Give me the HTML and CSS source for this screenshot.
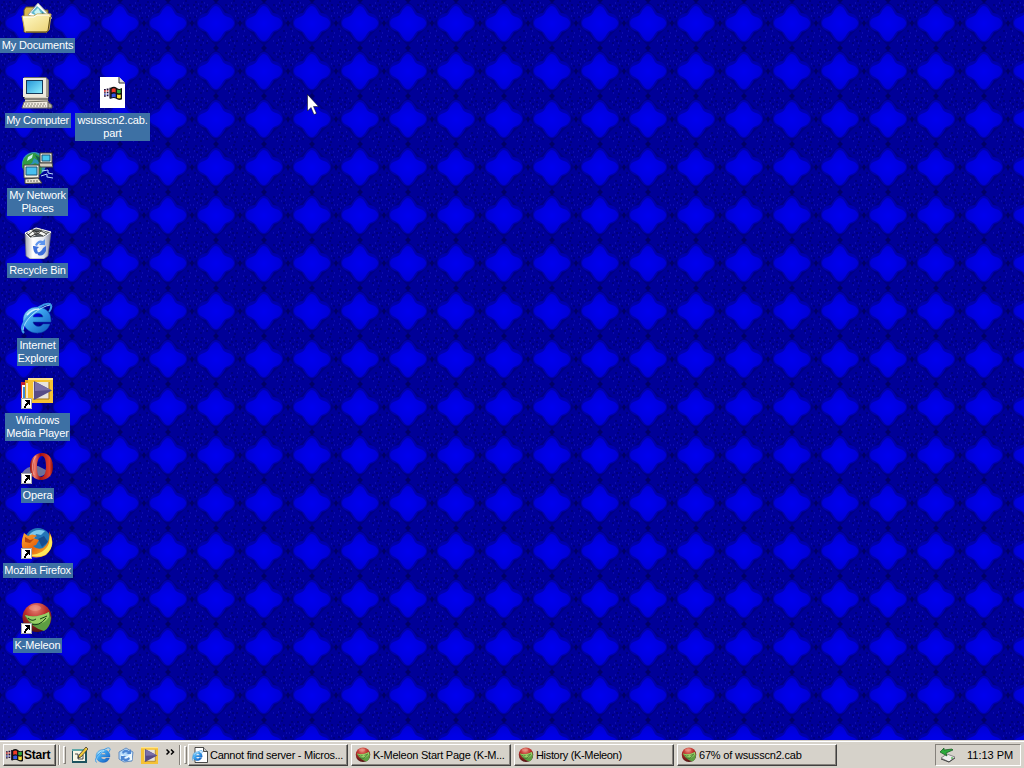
FILE: index.html
```
<!DOCTYPE html>
<html lang="en">
<head>
<meta charset="utf-8">
<title>Desktop</title>
<link rel="stylesheet" href="styles.css">
</head>
<body>
<svg class="defs" width="0" height="0" aria-hidden="true">
  <defs>
    <radialGradient id="gBall" cx=".45" cy=".2" r=".8"><stop offset="0" stop-color="#e88878"/><stop offset=".45" stop-color="#bd2f2c"/><stop offset="1" stop-color="#4c1210"/></radialGradient>
    <linearGradient id="gBlue" x1="0" y1="0" x2="1" y2="1"><stop offset="0" stop-color="#a8e4ff"/><stop offset=".4" stop-color="#3ca4ee"/><stop offset="1" stop-color="#0b54bc"/></linearGradient>
    <linearGradient id="gFold" x1="0" y1="0" x2="1" y2="1"><stop offset="0" stop-color="#fffbc8"/><stop offset="1" stop-color="#ecd274"/></linearGradient>
    <linearGradient id="gScreen" x1="0" y1="0" x2="1" y2="1"><stop offset="0" stop-color="#2898d8"/><stop offset="1" stop-color="#8ceeff"/></linearGradient>
    <linearGradient id="gBin"><stop offset="0" stop-color="#a4a8b4"/><stop offset=".3" stop-color="#fff"/><stop offset=".7" stop-color="#e4e8f2"/><stop offset="1" stop-color="#84889c"/></linearGradient>
    <linearGradient id="gOpera"><stop offset="0" stop-color="#8c0808"/><stop offset=".2" stop-color="#f07c6c"/><stop offset=".45" stop-color="#a01010"/><stop offset=".85" stop-color="#e04030"/><stop offset="1" stop-color="#800c0c"/></linearGradient>
    <linearGradient id="gFox" x1="0" y1="0" x2="1" y2="1"><stop offset="0" stop-color="#ffb13c"/><stop offset=".5" stop-color="#e8640c"/><stop offset="1" stop-color="#ffd83c"/></linearGradient>
    <radialGradient id="gLobe"><stop offset="0" stop-color="#0000ee"/><stop offset=".5" stop-color="#0000e4"/><stop offset="1" stop-color="#0000d4"/></radialGradient>
    <filter id="soft" x="0" y="0" width="1" height="1"><feGaussianBlur stdDeviation=".5"/></filter>

    <pattern id="tile" width="48" height="48" patternUnits="userSpaceOnUse">
      <rect width="48" height="48" fill="#000098"/>
      <path d="M24 1L47 23 24 46 1 23z" fill="#000084"/>
      <path d="M-2 23L0 20 2 23 0 27zM46 23L48 20 50 23 48 27zM21 0L24-3 27 0 24 3zM21 48L24 45 27 48z" fill="#000068"/>
      <path d="M24 4C28 4 30 8 33 13C39 13 43 18 43 23C43 28 39 31 34 32C31 38 28 42 24 42C20 42 17 38 14 32C9 31 5 28 5 23C5 18 9 13 15 13C18 8 20 4 24 4z" fill="#0000ae"/>
      <path d="M24 6C26 6 28 8 30 12C31 15 33 16 36 17C40 18 42 21 42 23C42 26 39 29 36 30C32 31 31 34 29 37C27 39 26 41 24 41C22 41 20 39 18 36C16 32 14 31 11 29C8 28 6 26 6 23C6 20 8 18 12 17C15 16 17 14 18 11C20 8 22 6 24 6z" fill="url(#gLobe)"/>
      <path d="M2 7h1M6 4h1M10 9h1M1 13h1M5 11h1M12 3h1M39 3h1M45 8h1M41 9h1M36 6h1M46 13h1M3 36h1M7 40h1M11 43h1M2 44h1M10 36h1M38 40h1M42 43h1M45 37h1M37 45h1M46 33h1M4 16h1M8 13h1M15 5h1M43 16h1M4 31h1M15 41h1M33 41h1" stroke="#1818c4"/>
      <path d="M4 8h2M8 6h2M13 7h2M3 2h2M43 5h2M37 9h2M41 1h2M4 41h2M8 45h2M14 43h2M44 41h2M39 37h2M42 46h2M33 5h2M2 17h2M45 18h2M2 29h2M43 31h2M8 11h2M1 5h2M9 2h2M39 6h2M43 11h2M5 37h2M10 40h2M36 43h2M40 41h2" stroke="#000064"/>
    </pattern>

    <symbol id="arrow" viewBox="0 0 11 11"><path d="M0 0h11v11H0z" fill="#fff"/><path d="M.5.5h10v10H.5z" fill="none" stroke="#555" stroke-width=".5"/><path d="M4 2h5v5H8V6H7v1H6v1H5v2H3V8h1V6h1V5h1V4H5V3H4z" fill="#000"/></symbol>

    <symbol id="flag" viewBox="0 0 20 16">
      <path d="M0 3h2v1.500H0zM3 2.500h2V4H3zM0 6.500h2V8H0zM3 6h2v1.500H3zM0 10h2v1.500H0zM3 9.500h2V11H3zM6 1.500h1.500v12H6z" fill="#201038"/>
      <path d="M0 4.500h2v1.500H0zM3 4.500h2v1H3z" fill="#d02020"/><path d="M0 8.500h2v1H0zM3 8h2v1H3z" fill="#2838c8"/>
      <path d="M7 2Q11-1 14 1.500T20 2V14.500Q17 16 14 14T7 14z" fill="#111"/>
      <path d="M8.500 3Q11 1.500 13 2.800V7Q11 5.800 8.500 7z" fill="#f03c28"/><path d="M14.500 3.500Q17 4.500 18.600 3.500V7.500Q17 8.500 14.500 7.500z" fill="#30a838"/>
      <path d="M8.500 8.500Q11 7.300 13 8.400V12.500Q11 11.500 8.500 12.500z" fill="#3454e0"/><path d="M14.500 9Q17 10 18.600 9V13Q17 14 14.500 13z" fill="#f8dc30"/>
    </symbol>

    <symbol id="docs" viewBox="0 0 32 32">
      <path d="M3 8L5 5h8l2 3h12v12l-1 10H3z" fill="#d8b850" stroke="#60501c"/>
      <path d="M7 13L17 1 31 16 25 20z" fill="#fff" stroke="#9098a0"/><path d="M10 11l6-7 10 9-4 4z" fill="#60b8cc"/><path d="M13 10l4-4 3 5-4 3z" fill="#c8f4f4"/><path d="M21 10l3 3-3 2z" fill="#286098"/>
      <path d="M1 14h12l3-2h14l-2 16-2 2H4z" fill="url(#gFold)" stroke="#c8aa50"/><path d="M29 15l-2 14-2 1H5" fill="none" stroke="#584814"/><path d="M2 15h11l3-2h12" fill="none" stroke="#fff"/>
    </symbol>
    <symbol id="pc" viewBox="0 0 32 32">
      <path d="M3 0h22l3 3v17l-3 2H3z" fill="#70706c"/><path d="M2 1h23v19H2z" fill="#eeeade"/><path d="M25 1l2 2v16l-2 1z" fill="#a49f90"/><path d="M5 3h17v14H5z" fill="#173858"/><path d="M6 4h15v12H6z" fill="url(#gScreen)"/>
      <path d="M4 20h23v5H4z" fill="#d8d2c2"/><path d="M4 22h24" stroke="#333"/><path d="M3 25l24-1 2 7H1z" fill="#efebdf" stroke="#706c60"/><path d="M4 27h20M3 29h22" stroke="#888478" stroke-dasharray="2 1"/><path d="M27 25l4 3v3h-4z" fill="#b8b4a8" stroke="#555"/>
    </symbol>
    <symbol id="net" viewBox="0 0 32 32">
      <circle cx="13" cy="12" r="12" fill="#2c90b8"/><path d="M2 9Q6 1 14 1l6 4-4 3-3-2-2 5-5 3-2 5-3-4zM8 15l6-4 7 3-1 8-8 1z" fill="#319b43"/><path d="M7 5l5-3-1 4-5 3z" fill="#c8f4e8"/><path d="M14 3l7 4-3 4z" fill="#125f53"/>
      <path d="M19 1h12v10H19z" fill="#f0ece0" stroke="#383830"/><path d="M21 3h8v6h-8z" fill="#48c8f0" stroke="#185478"/><path d="M18 11h13l1 4H19z" fill="#d0ccbc" stroke="#444"/>
      <path d="M3 13h15v13H3z" fill="#f4f0e4" stroke="#45453b"/><path d="M5 15h11v8H5z" fill="#48c0f0" stroke="#185478"/><path d="M4 27l13-1 4 5-17 .5z" fill="#e8e4d4" stroke="#45453b"/><path d="M6 29h12" stroke="#666" stroke-dasharray="2 1"/><path d="M21 19l6-1v3l5 1M20 24l6-2v3l6 1" fill="none" stroke="#b8d8ff"/>
    </symbol>
    <symbol id="bin" viewBox="0 0 32 32">
      <path d="M4 6L16 1 30 5 27 29 23 32H9L5 29z" fill="url(#gBin)" stroke="#646878" stroke-width=".7"/><path d="M4 6L15 1 30 5 23 10 9 11z" fill="#555b60" stroke="#fff"/>
      <path d="M6 6l5-3 4 3 5-3 7 3-5 3-5-2-6 3z" fill="#f6f6f2"/><path d="M7 8l5-4 3 4 5-4 6 3M10 2l6 3 5-2M9 10l7-4 6 3" fill="none" stroke="#222" stroke-width=".9"/>
      <path d="M14 18Q17 12 22 14L24 12V18H18L20 16Q17 16 16 19z" fill="#5c94ee"/><path d="M13 19l5 1-2 2 1 4-2 1q-3-3-3-8zM25 19v5q-3 6-8 4l-1-3q4 1 6-4z" fill="#3c6fdb"/>
    </symbol>
    <symbol id="ie" viewBox="0 0 32 32">
      <path fill-rule="evenodd" d="M16 5C24 5 30 10 30 18V20H12C13 25 20 26 22 22H29C27 28 22 31 16 31C8 31 2 25 2 18C2 11 8 5 16 5zM12 15H22C21 10 13 10 12 15z" fill="url(#gBlue)" stroke="#0d4da8" stroke-width=".5"/>
      <path d="M3 31Q-3 25 9 13Q22 0 29 2Q32 4 28 10" fill="none" stroke="#3b9ae8" stroke-width="2"/><path d="M2 28Q3 20 12 12Q22 4 29 3" fill="none" stroke="#9edaff"/>
      <path d="M6 13q5-6 12-6" fill="none" stroke="#d2f4ff" stroke-width="1.500"/>
    </symbol>
    <symbol id="wmp" viewBox="0 0 32 32">
      <path d="M0 5h7v20H0z" fill="#c02034"/><path d="M1 8h6v17H1z" fill="#f0f8ff"/><path d="M2 10h5v15H2z" fill="#3788d8"/><path d="M4 3h6v24H4z" fill="#e0a41c"/><path d="M5 6h3v21H5z" fill="#f6e9c4"/>
      <path d="M7 1h25v25H7z" fill="#f6c233"/><path d="M7 1h25v2H7z" fill="#ffe48c"/><path d="M12 5h16v17H12z" fill="#e8e4de"/><path d="M28 5v17H12" fill="none" stroke="#a0721d"/><path d="M13 4l18 9.500L13 23z" fill="#564b86"/><path d="M14 5l16 8-16 1z" fill="#7b70a8"/>
    </symbol>
    <symbol id="opera" viewBox="0 0 32 32">
      <path d="M1 21Q6 13 17 14L27 19Q22 27 9 24z" fill="#888b98" opacity=".8"/><path fill-rule="evenodd" d="M21 1C28 1 32 7 32 15S27 28 20 28S9 23 9 15S14 1 21 1zM21 4C18 4 16 9 16 15S17 25 20 25S25 21 25 15S24 4 21 4z" fill="url(#gOpera)"/><path d="M15 4Q9 12 13 23" fill="none" stroke="#ffc0b0" stroke-width=".6"/>
    </symbol>
    <symbol id="fox" viewBox="0 0 32 32">
      <circle cx="17" cy="14" r="13" fill="#2475b8"/><path d="M8 8Q14 1 24 4L20 8l-5-1-2 5z" fill="#7cc8ee"/><path d="M17 12l6-3 4 6-6 5z" fill="#164c91"/>
      <path d="M28 4Q36 18 25 28Q13 34 4 26Q-2 19 3 6L7 9Q11 6 16 9L12 11 18 13 15 18 12 19Q16 23 22 21Q30 15 28 4z" fill="url(#gFox)"/><path d="M29 7Q35 20 24 28Q16 31 9 28Q24 27 28 16z" fill="#ffe858"/><path d="M4 10l5 3 4-1-4 4-5-1z" fill="#b84811"/>
    </symbol>
    <symbol id="kmel" viewBox="0 0 32 32">
      <circle cx="16" cy="15.500" r="14.500" fill="url(#gBall)"/><path d="M4 13Q15 17 28 10L30 16Q29 26 23 29Q11 26 4 14z" fill="#5d9e42"/><path d="M4 13Q14 17 28 10L28 15Q23 24 11 21z" fill="#98cf66"/><path d="M7 16q4 4 8 1M10 22q8 3 15-6M19 17l7-3" fill="none" stroke="#153f18"/><ellipse cx="14" cy="6" rx="6" ry="3" fill="#f0a396" opacity=".45"/>
    </symbol>
    <symbol id="file" viewBox="0 0 32 32">
      <path d="M4 0h19l6 6v25H4z" fill="#fff"/><path d="M23 0v6h6" fill="#ddd" stroke="#333"/><use href="#flag" x="8" y="8" width="18" height="17"/>
    </symbol>
    <symbol id="note" viewBox="0 0 16 16">
      <path d="M0 2h15v14H0z" fill="#1d535f"/><path d="M1 4h12v10H1z" fill="#f6f6e6"/><path d="M0 2h15v2H0z" fill="#60a8a8"/><path d="M6 11l1-3 7-8 2 2-7 8z" fill="#f0c83c" stroke="#222" stroke-width=".7"/><path d="M3 7h3v5h5V8" fill="none" stroke="#222" stroke-width=".8"/>
    </symbol>
    <symbol id="mail" viewBox="0 0 16 16">
      <path d="M1 5l7-4 7 4-1 9-8 1-5-3z" fill="#b8dcfc" stroke="#4c7ab5" stroke-width=".8"/><path d="M3 7l5 3 6-4v7l-8 1z" fill="#edf8ff"/><path d="M4 5q3-4 7-1l2-2v5H8l2-1q-3-2-5 1zM12 12q-4 4-7 1l-2 1V9h5l-2 2q2 2 5-1z" fill="#4c85d2"/>
    </symbol>
    <symbol id="page" viewBox="0 0 16 16"><path d="M3 .5h8.500l4 4v11H3z" fill="#fff" stroke="#222" stroke-width=".8"/><path d="M11.500.5v4h4" fill="#ccc" stroke="#222" stroke-width=".8"/><use href="#ie" x="0" y="3" width="11" height="11"/></symbol>
    <symbol id="eject" viewBox="0 0 17 16"><path d="M2 11l6-4 8 3-6 5z" fill="#eee" stroke="#888"/><path d="M2 12l8 3 6-4" fill="none" stroke="#444"/><path d="M1 5l4-4v2l8-1 1 1-7 3 1 3z" fill="#2dab3b" stroke="#10551c" stroke-width=".7"/><path d="M12 11h2" stroke="#2a2"/></symbol>
  </defs>
</svg>
<div class="screen">
  <svg class="wallpaper" width="1024" height="740" aria-hidden="true"><rect width="1024" height="740" fill="url(#tile)" filter="url(#soft)"/></svg>
  <main class="desktop">
    <div class="item"><svg class="icon"><use href="#docs"/></svg><span class="label t-docs">My Documents</span></div>
    <div class="item"><svg class="icon"><use href="#pc"/></svg><span class="label t-pc">My Computer</span></div>
    <div class="item"><svg class="icon"><use href="#net"/></svg><span class="label t-net">My Network<br>Places</span></div>
    <div class="item"><svg class="icon"><use href="#bin"/></svg><span class="label t-bin">Recycle Bin</span></div>
    <div class="item"><svg class="icon"><use href="#ie"/></svg><span class="label t-ie">Internet<br>Explorer</span></div>
    <div class="item"><svg class="icon"><use href="#wmp"/><use href="#arrow" y="21" width="11" height="11"/></svg><span class="label t-wmp">Windows<br>Media Player</span></div>
    <div class="item"><svg class="icon"><use href="#opera"/><use href="#arrow" y="21" width="11" height="11"/></svg><span class="label t-opera">Opera</span></div>
    <div class="item"><svg class="icon"><use href="#fox"/><use href="#arrow" y="21" width="11" height="11"/></svg><span class="label t-fox">Mozilla Firefox</span></div>
    <div class="item"><svg class="icon"><use href="#kmel"/><use href="#arrow" y="21" width="11" height="11"/></svg><span class="label t-kmel">K-Meleon</span></div>
    <div class="item cab"><svg class="icon"><use href="#file"/></svg><span class="label t-cab">wsusscn2.cab.<br>part</span></div>
  </main>
  <footer class="taskbar">
    <button class="start"><svg width="17" height="15"><use href="#flag"/></svg><span>Start</span></button>
    <i class="rule"></i><i class="grip"></i>
    <nav class="quick">
      <svg width="16" height="16"><use href="#note"/></svg>
      <svg width="16" height="16"><use href="#ie"/></svg>
      <svg width="16" height="16"><use href="#mail"/></svg>
      <svg width="17" height="17" viewBox="7 1 25 25"><use href="#wmp" width="32" height="32"/></svg>
    </nav>
    <svg class="more" width="9" height="7" viewBox="0 0 9 7"><path d="M.5.5L3 3 .5 5.500M5 .5L7.500 3 5 5.500" fill="none" stroke="#000" stroke-width="1.500"/></svg>
    <i class="rule"></i><i class="grip"></i>
    <div class="tasks">
      <button class="task"><svg width="16" height="16"><use href="#page"/></svg><span class="k-find">Cannot find server - Micros...</span></button>
      <button class="task"><svg width="16" height="16"><use href="#kmel"/></svg><span class="k-start">K-Meleon Start Page (K-M...</span></button>
      <button class="task"><svg width="16" height="16"><use href="#kmel"/></svg><span class="k-hist">History (K-Meleon)</span></button>
      <button class="task"><svg width="16" height="16"><use href="#kmel"/></svg><span class="k-cab">67% of wsusscn2.cab</span></button>
    </div>
    <div class="tray"><svg width="17" height="16"><use href="#eject"/></svg><span>11:13 PM</span></div>
  </footer>
  <svg class="cursor" width="12" height="21" viewBox="0 0 12 21" aria-hidden="true"><path d="M.5.5V17L4 13.500 7 20.500 9.500 19.500 6.500 12.500H11.500z" fill="#fff" stroke="#000" stroke-width=".5"/></svg>
</div>
</body>
</html>
```
FILE: styles.css
```
* { box-sizing: border-box; }
body { margin: 0; overflow: hidden; font: 11px/13px "Liberation Sans", Arial, sans-serif; }
svg { flex: none; }
.defs { position: absolute; }
.screen { position: relative; width: 1024px; height: 768px; display: flex; flex-direction: column; background: #00008a; }
.wallpaper { position: absolute; inset: 0; }
.desktop { position: relative; height: 740px; display: grid; grid-template-columns: 75px 75px; grid-template-rows: repeat(9, 75px); grid-auto-flow: column; }
.item { display: flex; flex-direction: column; align-items: center; padding-top: 2px; }
.cab { grid-column: 2; grid-row: 2; }
.icon { width: 32px; height: 32px; margin-left: -1px; }
.label { margin-top: 4px; padding: 1px 0; background: #3d70a4; color: #fff; text-align: center; white-space: nowrap; flex: none; letter-spacing: -.15px; }
.t-docs { width: 75px; }
.t-pc { width: 66px; letter-spacing: -.3px; }
.t-net { width: 61px; }
.t-bin { width: 61px; }
.t-ie { width: 42px; }
.t-wmp { width: 65px; }
.t-opera { width: 33px; }
.t-fox { width: 70px; letter-spacing: -.3px; }
.t-kmel { width: 49px; }
.t-cab { width: 75px; }

.taskbar { position: relative; height: 28px; display: flex; padding: 3px 3px 2px; background: #d6d2ca; border-top: 1px solid #d6d2ca; box-shadow: inset 0 1px #fff; align-items: stretch; }
button { font: inherit; color: #000; padding: 0; border: 1px solid; border-color: #fff #404040 #404040 #fff; box-shadow: inset -1px -1px #85817b; background: #d6d2ca; display: flex; align-items: center; white-space: nowrap; }
.start { width: 53px; padding-left: 2px; gap: 1px; font-weight: bold; font-size: 12px; letter-spacing: -.2px; }
.rule { width: 2px; margin: 1px 0 1px 2px; border-left: 1px solid #85817b; border-right: 1px solid #fff; }
.grip { width: 3px; margin: 2px 0 2px 3px; border: 1px solid; border-color: #fff #85817b #85817b #fff; }
.quick { display: flex; align-items: center; gap: 7px; margin-left: 6px; }
.more { margin: 5px 2px 0 8px; }
.tasks { display: flex; gap: 3px; margin-left: 1px; }
.task { width: 160px; padding-left: 3px; gap: 2px; }
.k-find { letter-spacing: -.27px; }
.k-start { letter-spacing: -.24px; }
.k-hist { letter-spacing: -.33px; }
.k-cab { letter-spacing: -.2px; }
.tray { margin-left: auto; width: 86px; border: 1px solid; border-color: #85817b #fff #fff #85817b; display: flex; align-items: center; padding-left: 3px; gap: 11px; white-space: nowrap; }
.cursor { position: absolute; left: 307px; top: 94px; }
```
